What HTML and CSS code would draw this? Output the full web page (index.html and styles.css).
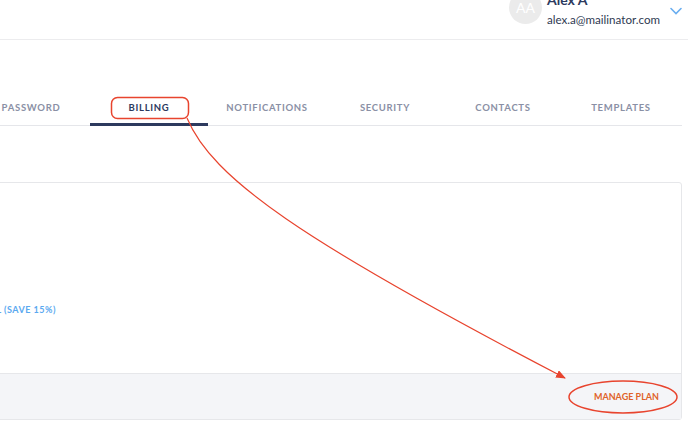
FILE: index.html
```html
<!DOCTYPE html>
<html lang="en">
<head>
    <meta charset="UTF-8">
    <meta name="viewport" content="width=device-width, initial-scale=1.0">
    <title>Settings - Billing</title>
    <link rel="stylesheet" href="styles.css">
</head>
<body>
    <header class="topbar">
        <div class="user">
            <div class="avatar">AA</div>
            <div class="user-info">
                <div class="user-name">Alex A</div>
                <div class="user-email">alex.a@mailinator.com</div>
            </div>
            <svg class="chevron" width="12" height="8" viewBox="0 0 12 8">
                <path d="M1 1.5 L6 6.5 L11 1.5" fill="none" stroke="#6aaef0" stroke-width="1.6" stroke-linecap="round"/>
            </svg>
        </div>
    </header>

    <nav class="tabs">
        <a class="tab">Password</a>
        <a class="tab active">Billing</a>
        <a class="tab">Notifications</a>
        <a class="tab">Security</a>
        <a class="tab">Contacts</a>
        <a class="tab">Templates</a>
    </nav>

    <section class="card">
        <div class="card-body">
            <span class="save-link">Annual (Save 15%)</span>
        </div>
        <div class="card-footer">
            <a class="manage">Manage Plan</a>
        </div>
    </section>

    <svg class="annotation" width="688" height="426" viewBox="0 0 688 426">
        <defs>
            <marker id="head" markerWidth="10" markerHeight="8" refX="9" refY="4" orient="auto" markerUnits="userSpaceOnUse">
                <path d="M0 0 L10 4 L0 8 Z" fill="#e8442e"/>
            </marker>
        </defs>
        <rect x="111.5" y="97.5" width="77" height="21" rx="6" fill="none" stroke="#e8442e" stroke-width="1.5"/>
        <path d="M187 118 C 212 178 300 240 565 378" fill="none" stroke="#e8442e" stroke-width="1.2" marker-end="url(#head)"/>
        <ellipse cx="623" cy="397" rx="54" ry="16" fill="none" stroke="#e8442e" stroke-width="1.5"/>
    </svg>
</body>
</html>
```

FILE: styles.css
```css
body {
    margin: 0;
    width: 688px;
    height: 426px;
    overflow: hidden;
    position: relative;
    background: #fff;
    font-family: Lato, "Open Sans", sans-serif;
    color: #2d3a5e;
}
.topbar {
    height: 39px;
    border-bottom: 1px solid #ececee;
    display: flex;
    justify-content: flex-end;
}
.user {
    display: flex;
    align-items: flex-start;
    margin-top: -9px;
    margin-right: 6px;
}
.avatar {
    width: 33px;
    height: 33px;
    border-radius: 50%;
    background: #ebebeb;
    color: #fff;
    font-size: 14px;
    display: flex;
    align-items: center;
    justify-content: center;
    margin-right: 5px;
}
.user-name {
    font-size: 14px;
    font-weight: 700;
    line-height: 18px;
    color: #2d3a5e;
}
.user-email {
    font-size: 11.6px;
    line-height: 18px;
    margin-top: 2px;
    color: #2f3a52;
}
.chevron {
    margin-left: 10px;
    margin-top: 16px;
}
.tabs {
    display: flex;
    margin: 49px 6px 0 -28px;
    border-bottom: 1px solid #e5e6ea;
}
.tab {
    width: 118px;
    flex: none;
    text-align: center;
    padding: 13px 0 10px;
    font-size: 9.5px;
    font-weight: 700;
    letter-spacing: 0.7px;
    text-transform: uppercase;
    color: #8a90a5;
    border-bottom: 3px solid transparent;
    margin-bottom: -1px;
}
.tab.active {
    color: #2d3a5e;
    border-bottom-color: #2d3a5e;
}
.card {
    margin: 56px 6px 0 -20px;
    border: 1px solid #e6e7ea;
    border-radius: 3px;
    background: #fff;
}
.card-body {
    height: 190px;
    position: relative;
}
.save-link {
    position: absolute;
    left: -20px;
    top: 121px;
    white-space: nowrap;
    font-size: 9px;
    font-weight: 700;
    letter-spacing: 0.5px;
    text-transform: uppercase;
    color: #5aa9f0;
}
.card-footer {
    height: 45px;
    background: #f4f5f8;
    border-top: 1px solid #e6e7ea;
    display: flex;
    align-items: center;
    justify-content: flex-end;
    padding-right: 22px;
}
.manage {
    font-size: 9px;
    font-weight: 700;
    letter-spacing: 0;
    text-transform: uppercase;
    color: #e0622a;
}
.annotation {
    position: absolute;
    left: 0;
    top: 0;
    pointer-events: none;
}
```
